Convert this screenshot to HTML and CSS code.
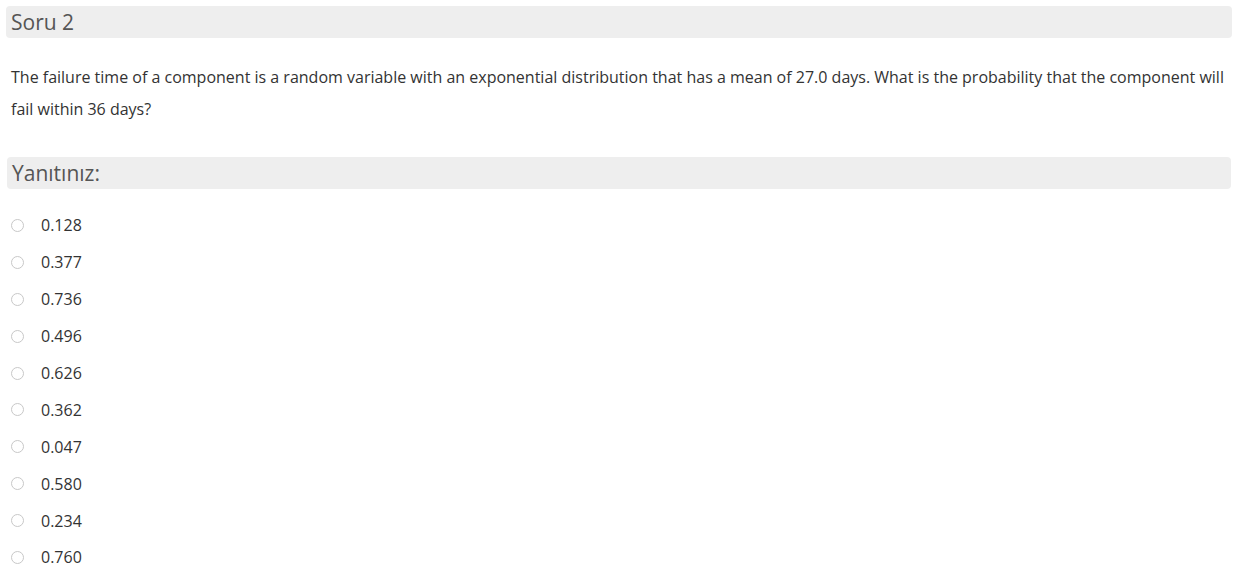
FILE: index.html
```html
<!DOCTYPE html>
<html>
<head>
<meta charset="utf-8">
<link rel="stylesheet" href="styles.css">
</head>
<body>
<div class="page">
  <div class="bar">Soru 2</div>
  <div class="question">The failure time of a component is a random variable with an exponential distribution that has a mean of 27.0 days. What is the probability that the component will fail within 36 days?</div>
  <div class="bar bar-answer">Yanıtınız:</div>
  <ul class="options">
    <li><span class="radio"></span><span>0.128</span></li>
    <li><span class="radio"></span><span>0.377</span></li>
    <li><span class="radio"></span><span>0.736</span></li>
    <li><span class="radio"></span><span>0.496</span></li>
    <li><span class="radio"></span><span>0.626</span></li>
    <li><span class="radio"></span><span>0.362</span></li>
    <li><span class="radio"></span><span>0.047</span></li>
    <li><span class="radio"></span><span>0.580</span></li>
    <li><span class="radio"></span><span>0.234</span></li>
    <li><span class="radio"></span><span>0.760</span></li>
  </ul>
</div>
</body>
</html>
```
FILE: styles.css
```css
html, body {
  margin: 0;
  padding: 0;
  background: #fff;
}
.page {
  padding: 6px 10px 0 6px;
  font-family: "Open Sans", "DejaVu Sans", sans-serif;
  color: #333;
}
.bar {
  background: #eeeeee;
  border-radius: 4px;
  height: 32px;
  line-height: 32px;
  padding-left: 5px;
  font-size: 21px;
  color: #555;
}
.question {
  margin-top: 23px;
  padding-left: 5px;
  font-size: 16px;
  line-height: 32px;
  color: #333;
}
.bar-answer {
  margin-top: 32px;
  margin-left: 1px;
  margin-right: 1px;
}
.options {
  list-style: none;
  margin: 18px 0 0 0;
  padding: 0;
}
.options li {
  display: flex;
  align-items: center;
  height: 36.9px;
  font-size: 16px;
  color: #333;
}
.radio {
  width: 11px;
  height: 11px;
  border: 1px solid #c8c8c8;
  border-radius: 50%;
  margin-left: 5px;
  margin-right: 17px;
  background: #fff;
  flex: none;
}
```
